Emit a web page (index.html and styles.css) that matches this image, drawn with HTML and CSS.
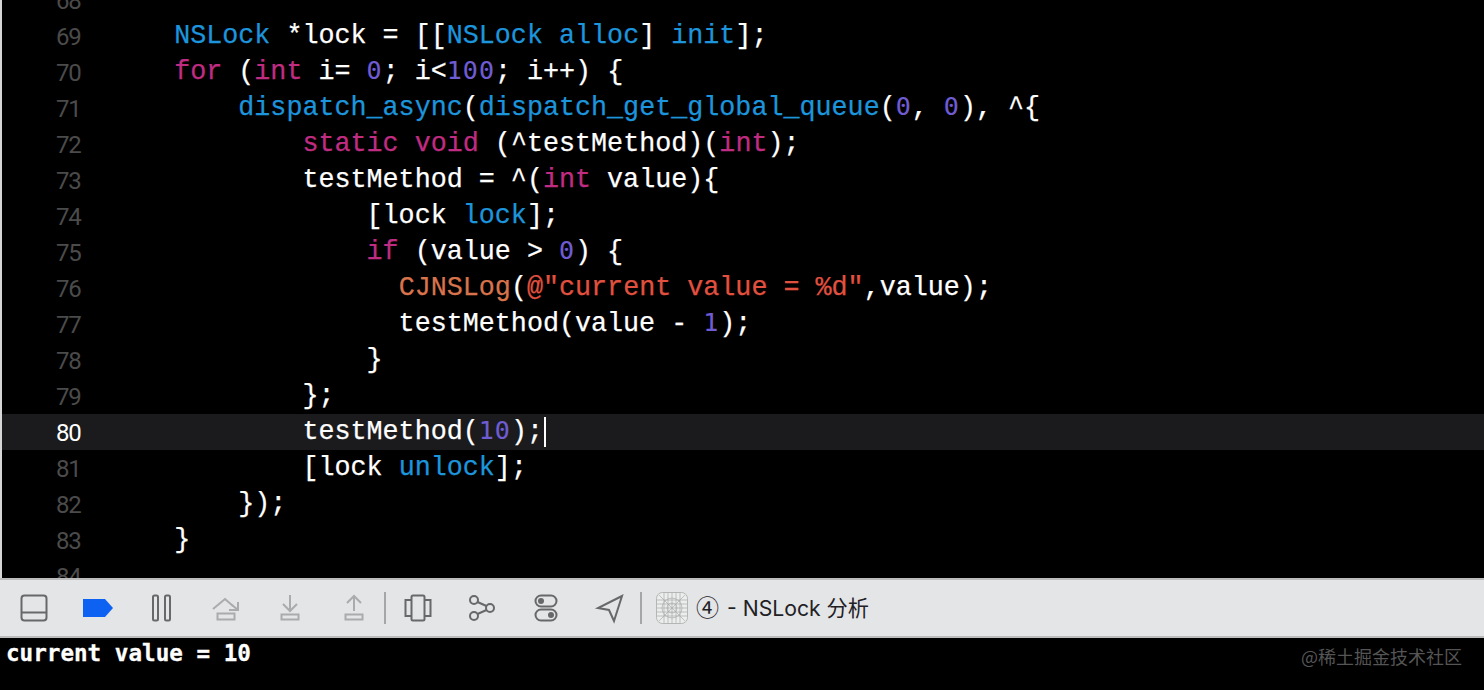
FILE: index.html
```html
<!DOCTYPE html>
<html lang="zh">
<head>
<meta charset="utf-8">
<title>NSLock</title>
<link rel="stylesheet" href="styles.css">
</head>
<body>
<main class="editor">
<div class="line"><span class="num">68</span><code class="code"></code></div>
<div class="line"><span class="num">69</span><code class="code">    <i class="cls">NSLock</i> *lock = [[<i class="cls">NSLock</i> <i class="cls">alloc</i>] <i class="cls">init</i>];</code></div>
<div class="line"><span class="num">70</span><code class="code">    <i class="kw">for</i> (<i class="kw">int</i> i= <i class="n">0</i>; i&lt;<i class="n">100</i>; i++) {</code></div>
<div class="line"><span class="num">71</span><code class="code">        <i class="cls">dispatch_async</i>(<i class="cls">dispatch_get_global_queue</i>(<i class="n">0</i>, <i class="n">0</i>), ^{</code></div>
<div class="line"><span class="num">72</span><code class="code">            <i class="kw">static</i> <i class="kw">void</i> (^testMethod)(<i class="kw">int</i>);</code></div>
<div class="line"><span class="num">73</span><code class="code">            testMethod = ^(<i class="kw">int</i> value){</code></div>
<div class="line"><span class="num">74</span><code class="code">                [lock <i class="cls">lock</i>];</code></div>
<div class="line"><span class="num">75</span><code class="code">                <i class="kw">if</i> (value &gt; <i class="n">0</i>) {</code></div>
<div class="line"><span class="num">76</span><code class="code">                  <i class="mac">CJNSLog</i>(<i class="str">@"current value = %d"</i>,value);</code></div>
<div class="line"><span class="num">77</span><code class="code">                  testMethod(value - <i class="n">1</i>);</code></div>
<div class="line"><span class="num">78</span><code class="code">                }</code></div>
<div class="line"><span class="num">79</span><code class="code">            };</code></div>
<div class="line current"><span class="num">80</span><code class="code">            testMethod(<i class="n">10</i>);<span class="caret"></span></code></div>
<div class="line"><span class="num">81</span><code class="code">            [lock <i class="cls">unlock</i>];</code></div>
<div class="line"><span class="num">82</span><code class="code">        });</code></div>
<div class="line"><span class="num">83</span><code class="code">    }</code></div>
<div class="line"><span class="num">84</span><code class="code"></code></div>
</main>

<nav class="toolbar">
  <span class="slot"><svg viewBox="0 0 32 32" class="ico dark"><rect x="3.5" y="3.5" width="25" height="25" rx="3"/><path d="M3.5 20.5h25"/></svg></span>
  <span class="slot"><svg viewBox="0 0 32 32" class="ico"><path class="blue" d="M1 7h22l8 9-8 9H1z"/></svg></span>
  <span class="slot"><svg viewBox="0 0 32 32" class="ico dark"><rect x="7" y="3.5" width="5" height="25" rx="1.5"/><rect x="19" y="3.5" width="5" height="25" rx="1.5"/></svg></span>
  <span class="slot"><svg viewBox="0 0 32 32" class="ico light"><path d="M3 17 15 7l8 7"/><path d="M19 18h9v-8"/><path d="M28 18l-6-5"/><rect x="7.500" y="21.500" width="17" height="6"/></svg></span>
  <span class="slot"><svg viewBox="0 0 32 32" class="ico light"><path d="M16 3v15M9 12l7 7 7-7"/><rect x="7.500" y="22.500" width="17" height="5"/></svg></span>
  <span class="slot"><svg viewBox="0 0 32 32" class="ico light"><path d="M16 19V4M9 11l7-7 7 7"/><rect x="7.500" y="22.500" width="17" height="5"/></svg></span>
  <span class="sep"></span>
  <span class="slot"><svg viewBox="0 0 32 32" class="ico dark"><rect x="9.500" y="3.500" width="13" height="25" rx="1.500"/><path d="M9.500 8H3.500v16h6M22.500 8h6v16h-6"/></svg></span>
  <span class="slot"><svg viewBox="0 0 32 32" class="ico dark"><circle cx="8" cy="8" r="4"/><circle cx="8" cy="24" r="4"/><circle cx="24" cy="16" r="4"/><path d="M11.500 10l9 4M11.500 22l9-4"/></svg></span>
  <span class="slot"><svg viewBox="0 0 32 32" class="ico dark"><rect x="5.500" y="3.500" width="21" height="11" rx="5.500"/><rect x="5.500" y="17.500" width="21" height="11" rx="5.500"/><circle class="fill" cx="11" cy="9" r="3"/><circle class="fill" cx="21" cy="23" r="3"/></svg></span>
  <span class="slot"><svg viewBox="0 0 32 32" class="ico dark"><path d="M28 4 4 16l11 2 5 11z"/></svg></span>
  <span class="sep"></span>
  <svg viewBox="0 0 32 32" class="app">
    <rect class="app-bg" x="0.500" y="0.500" width="31" height="31" rx="6"/>
    <path d="M1 8h30M1 12h30M1 16h30M1 20h30M1 24h30M8 1v30M12 1v30M16 1v30M20 1v30M24 1v30M3 3l26 26M29 3 3 29"/>
    <circle cx="16" cy="16" r="10"/><circle cx="16" cy="16" r="5"/>
  </svg>
  <span class="scheme"><span class="circled">④</span> - NSLock 分析</span>
</nav>

<section class="console">
  <pre class="out">current value = 10</pre>
  <span class="mark">@稀土掘金技术社区</span>
</section>
</body>
</html>
```

FILE: styles.css
```css
* { box-sizing: border-box; }
html, body { margin: 0; height: 100%; }
body { background: #000; overflow: hidden; display: flex; flex-direction: column; height: 690px; }

.editor {
  height: 578px;
  overflow: hidden;
  background: #000;
  border-left: 2px solid #d6d6d6;
  padding-top: 0;
  flex: none;
}
.line {
  display: flex;
  height: 36px;
  line-height: 36px;
  align-items: center;
  position: relative;
  top: -18px;
}
.line.current { background: #1b1b1d; }
.num {
  width: 108px;
  flex: none;
  padding: 2px 0 0 54px;
  font: 24px/36px Roboto, "Liberation Sans", sans-serif;
  letter-spacing: -1.2px;
  color: #4b4b4b;
}
.current .num { color: #fff; }
.code {
  font: 26.72px/36px "Liberation Mono", "DejaVu Sans Mono", monospace;
  color: #fff;
  white-space: pre;
  -webkit-text-stroke: 0.25px currentColor;
}
.code i { font-style: normal; }
.cls { color: #1c95dc; }
.kw { color: #c02c82; }
.code .n {
  color: #6f5cd2;
  font-family: "DejaVu Sans Mono", monospace;
  font-size: 25px;
  line-height: 0;
  letter-spacing: 1px;
  -webkit-text-stroke: 0.15px currentColor;
}
.mac { color: #d8734c; }
.str { color: #e2503f; }
.caret {
  display: inline-block;
  width: 2px;
  height: 30px;
  background: #fff;
  vertical-align: middle;
  margin-left: 1px;
}

.toolbar {
  height: 60px;
  flex: none;
  display: flex;
  align-items: center;
  padding-left: 2px;
  background: #e3e5e7;
  border-top: 2px solid #bcbcbc;
  border-bottom: 2px solid #bcbcbc;
}
.slot { width: 64px; flex: none; display: flex; justify-content: center; }
.ico { width: 32px; height: 32px; fill: none; stroke-width: 2; }
.ico.dark { stroke: #66686a; }
.ico.light { stroke: #a9abad; }
.ico .blue { fill: #0d62f2; stroke: none; }
.ico .fill { fill: #66686a; stroke: none; }
.sep { width: 2px; height: 32px; margin-left: -2px; background: #a4a6a8; flex: none; }
.app { width: 32px; height: 32px; margin-left: 14px; flex: none; fill: none; stroke: #aaa; stroke-width: 0.7; }
.app-bg { fill: #eceded; stroke: #b5b5b5; stroke-width: 1; }
.scheme {
  margin-left: 8px;
  font: 21.2px/32px Inter, "Noto Sans CJK SC", sans-serif;
  color: #1f2124;
  white-space: nowrap;
}
.circled { font-family: "Noto Sans CJK SC", sans-serif; font-size: 23px; line-height: 0; margin-right: 2px; }

.console {
  flex: 1;
  background: #000;
  display: flex;
  justify-content: space-between;
  padding: 0 22px 0 6px;
}
.out {
  margin: 0;
  font: bold 22.6px/30px "DejaVu Sans Mono", monospace;
  color: #fff;
  -webkit-text-stroke: 0.3px #fff;
}
.mark {
  font: 18px/24px "Noto Sans CJK SC", sans-serif;
  color: #555;
  margin-top: 6px;
}
```
